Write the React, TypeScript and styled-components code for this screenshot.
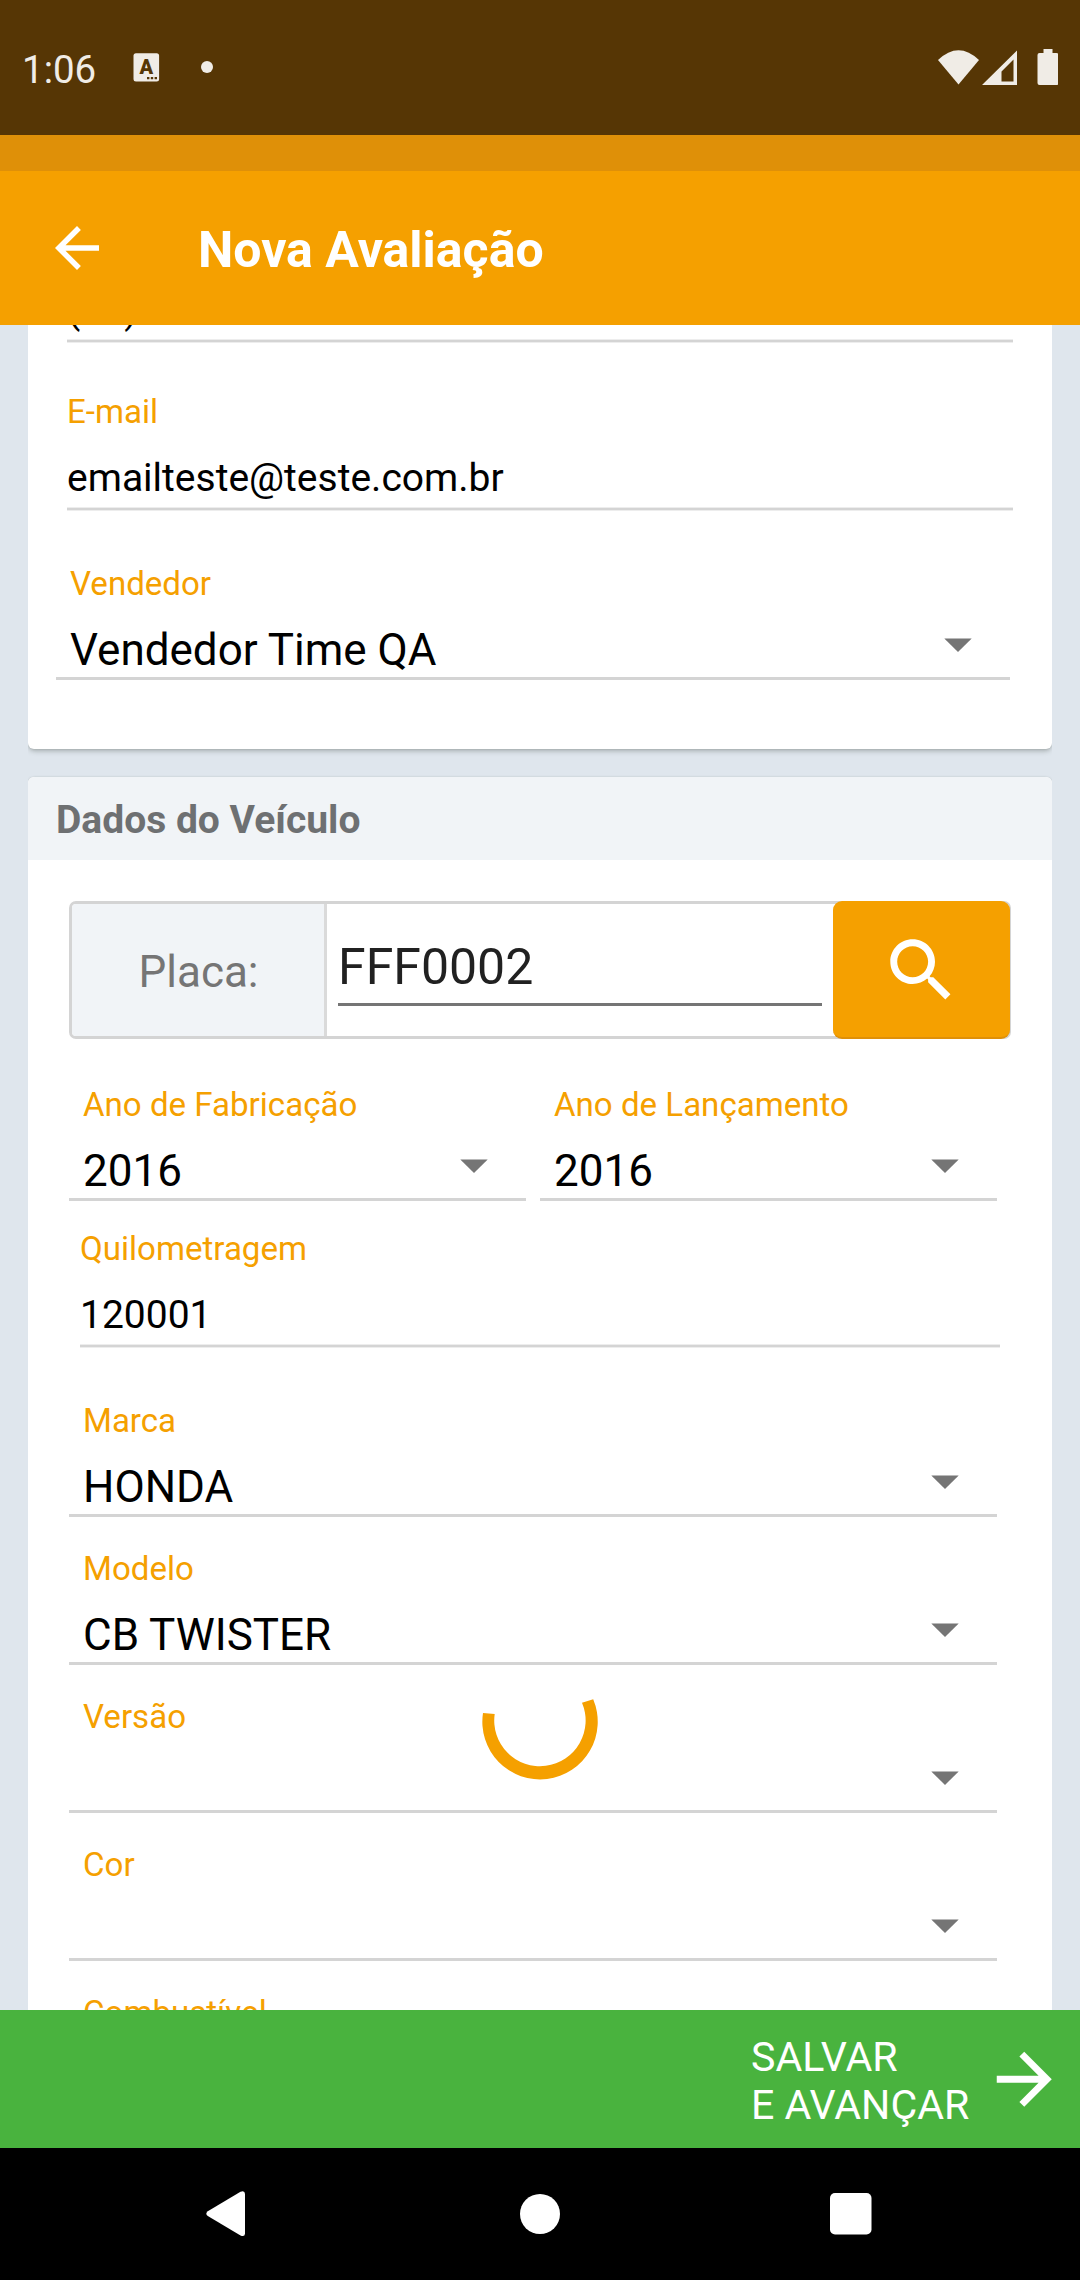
import React from 'react';
import styled, { createGlobalStyle } from 'styled-components';

const colors = {
  brand: '#f5a000',
  brandShade: '#df9008',
  status: '#563605',
  statusIcon: '#f0ece6',
  page: '#dfe6ed',
  panel: '#f1f4f7',
  line: '#d4d4d4',
  grey: '#757575',
  green: '#49b33e',
};

const GlobalStyle = createGlobalStyle`
  body {
    margin: 0;
    font-family: Roboto, 'Noto Sans', sans-serif;
  }
  * {
    box-sizing: border-box;
  }
`;

const Screen = styled.div`
  position: relative;
  display: flex;
  flex-direction: column;
  width: 1080px;
  height: 2280px;
  overflow: hidden;
  background: ${colors.page};
`;

const StatusBar = styled.div`
  display: flex;
  align-items: flex-start;
  height: 135px;
  flex-shrink: 0;
  padding: 47px 22px 0 22px;
  background: ${colors.status};
  color: ${colors.statusIcon};
`;

const Clock = styled.span`
  width: 111px;
  font-size: 38.5px;
  line-height: 46px;
`;

const StatusLeft = styled.div`
  display: flex;
  gap: 41px;
  flex: 1;
  padding-top: 6px;
`;

const StatusRight = styled.div`
  display: flex;
  padding-top: 2px;
`;

const Strip = styled.div`
  height: 36px;
  flex-shrink: 0;
  background: ${colors.brandShade};
`;

const Toolbar = styled.header`
  display: flex;
  align-items: center;
  height: 154px;
  flex-shrink: 0;
  padding-left: 44px;
  background: ${colors.brand};
`;

const Title = styled.h1`
  margin: 4px 0 0 88px;
  font-size: 50px;
  line-height: 58px;
  font-weight: 700;
  color: #fff;
`;

const ScrollArea = styled.main`
  display: flex;
  flex-direction: column;
  height: 1685px;
  flex-shrink: 0;
  gap: 28px;
  padding: 0 28px;
  overflow: hidden;
`;

const Card = styled.section<{ $scrolled?: number }>`
  flex-shrink: 0;
  margin-top: ${(p) => -(p.$scrolled ?? 0)}px;
  background: #fff;
  border-radius: 6px;
  box-shadow: 0 3px 5px -1px rgba(60, 70, 60, 0.35), 0 0 2px rgba(60, 70, 60, 0.18);
  clip-path: inset(-4px 0 -12px 0);
`;

const CardBody = styled.div`
  display: flex;
  flex-direction: column;
  padding-bottom: 69px;
`;

const CardHeader = styled.h2`
  height: 83px;
  margin: 0;
  padding: 20px 28px 0 28px;
  border-radius: 6px 6px 0 0;
  background: ${colors.panel};
  color: #6e7072;
  font-size: 39px;
  line-height: 47px;
  font-weight: 700;
`;

const FieldBox = styled.div<{ $top?: number; $left: number; $right: number }>`
  display: flex;
  flex-direction: column;
  margin: ${(p) => p.$top ?? 0}px ${(p) => p.$right}px 0 ${(p) => p.$left}px;
`;

const Label = styled.label`
  font-size: 33.1px;
  line-height: 39px;
  color: ${colors.brand};
`;

const InputValue = styled.span`
  height: 45px;
  margin-top: 24px;
  font-size: 39px;
  line-height: 47px;
  color: #000;
`;

const InputLine = styled.div`
  height: 4px;
  margin-top: 7px;
  background: ${colors.line};
  border-top: 1px solid #ededed;
  border-bottom: 1px solid #ededed;
`;

const SelectBox = styled.div<{ $top?: number; $left?: number; $right?: number }>`
  display: flex;
  flex: none;
  flex-direction: column;
  height: 116px;
  margin: ${(p) => p.$top ?? 0}px ${(p) => p.$right ?? 0}px 0 ${(p) => p.$left ?? 0}px;
  padding-left: 14px;
  border-bottom: 3px solid ${colors.line};
`;

const SelectRow = styled.div`
  display: flex;
  justify-content: space-between;
  align-items: flex-start;
  height: 52px;
  margin-top: 21px;
  padding-right: 38px;
`;

const SelectValue = styled.span`
  font-size: 44px;
  line-height: 52px;
  color: #000;
`;

const Caret = styled.svg`
  width: 28px;
  height: 14px;
  margin-top: 14px;
  fill: ${colors.grey};
`;

const PlateGroup = styled.div`
  display: flex;
  height: 138px;
  margin: 41px 41px 46px;
  border: 3px solid ${colors.line};
  border-radius: 7px;
`;

const PlateLabel = styled.div`
  width: 255px;
  padding: 42px 0 0 66.5px;
  border-right: 3px solid #dadada;
  border-radius: 4px 0 0 4px;
  background: ${colors.panel};
  color: ${colors.grey};
  font-size: 44px;
  line-height: 52px;
`;

const PlateInput = styled.div`
  flex: 1;
  height: 68px;
  margin: 34px 11px 0;
  border-bottom: 3px solid ${colors.grey};
  color: #212121;
  font-size: 50px;
  line-height: 58px;
`;

const SearchButton = styled.button`
  display: flex;
  align-items: center;
  justify-content: center;
  width: 177px;
  height: 138px;
  margin: -3px -2px 0 0;
  padding: 2px 0 0;
  border: 0;
  border-bottom: 2px solid ${colors.brandShade};
  border-radius: 9px;
  background: ${colors.brand};
`;

const YearRow = styled.div`
  display: grid;
  grid-template-columns: 1fr 1fr;
  gap: 14px;
  margin: 0 55px 0 41px;
`;

const Footer = styled.footer`
  display: flex;
  align-items: flex-start;
  justify-content: flex-end;
  height: 138px;
  flex-shrink: 0;
  padding-right: 14.5px;
  background: ${colors.green};
`;

const FooterText = styled.span`
  width: 232px;
  padding-top: 23px;
  color: #fff;
  font-size: 41.1px;
  line-height: 48px;
`;

const FooterArrow = styled.svg`
  width: 82.5px;
  height: 82.5px;
  margin-top: 27.5px;
  fill: #fff;
`;

const NavBar = styled.nav`
  display: grid;
  grid-template-columns: 451px 178px 443px;
  align-items: center;
  justify-items: center;
  height: 132px;
  flex-shrink: 0;
  background: #000;
`;

const Spinner = styled.svg`
  position: absolute;
  left: 470px;
  top: 1680px;
  width: 140px;
  height: 110px;
  fill: ${colors.brand};
`;

function InputField(props: { label?: string; value: string; top?: number; left: number; right: number }) {
  return (
    <FieldBox $top={props.top} $left={props.left} $right={props.right}>
      {props.label && <Label>{props.label}</Label>}
      <InputValue>{props.value}</InputValue>
      <InputLine />
    </FieldBox>
  );
}

function SelectField(props: { label: string; value?: string; top?: number; left?: number; right?: number }) {
  return (
    <SelectBox $top={props.top} $left={props.left} $right={props.right}>
      <Label>{props.label}</Label>
      <SelectRow>
        <SelectValue>{props.value}</SelectValue>
        <Caret viewBox="0 0 28 14">
          <path d="M0.3 0.4H27.7L14 14z" />
        </Caret>
      </SelectRow>
    </SelectBox>
  );
}

const vehicleFields = [
  { label: 'Marca', value: 'HONDA', top: 53 },
  { label: 'Modelo', value: 'CB TWISTER', top: 32 },
  { label: 'Versão', value: '', top: 32 },
  { label: 'Cor', value: '', top: 32 },
  { label: 'Combustível', value: '', top: 32 },
];

export default function App() {
  return (
    <>
      <GlobalStyle />
      <Screen>
        <StatusBar>
          <Clock>1:06</Clock>
          <StatusLeft>
            <svg width="27" height="29" viewBox="0 0 27 29">
              <rect x="0.5" y="0.2" width="25.6" height="28.4" rx="2.5" fill={colors.statusIcon} />
              <text x="13.2" y="21" fontSize="20" fontWeight="900" textAnchor="middle" fill={colors.status}>
                A
              </text>
              <path d="M14 24h2.4v2.3H14zM17.8 24h2.4v2.3h-2.4zM21.6 24H24v2.3h-2.4z" fill={colors.status} />
            </svg>
            <svg width="12" height="28" viewBox="0 0 12 28">
              <circle cx="6" cy="14" r="6" fill={colors.statusIcon} />
            </svg>
          </StatusLeft>
          <StatusRight>
            <svg width="120" height="38" viewBox="0 0 120 38" fill={colors.statusIcon}>
              <path d="M0 11Q20.5 -8.5 41 11L20.5 35.5z" />
              <path fillRule="evenodd" d="M79 1.5V36H44zM75.5 10.5L63.5 22.5V32.5H75.5z" />
              <path d="M105.5 0h9v4h4q2 0 2 2V34q0 2 -2 2h-17q-2 0 -2 -2V6q0 -2 2 -2h4z" />
            </svg>
          </StatusRight>
        </StatusBar>
        <Strip />
        <Toolbar>
          <svg width="66" height="66" viewBox="0 0 24 24" fill="#fff">
            <path d="M20 11H7.83l5.59-5.59L12 4l-8 8 8 8 1.41-1.41L7.83 13H20v-2z" />
          </svg>
          <Title>Nova Avaliação</Title>
        </Toolbar>

        <ScrollArea>
          <Card $scrolled={62}>
            <CardBody>
              <InputField value="(11)" left={39} right={39} />
              <InputField label="E-mail" value="emailteste@teste.com.br" top={49} left={39} right={39} />
              <SelectField label="Vendedor" value="Vendedor Time QA" top={53} left={28} right={42} />
            </CardBody>
          </Card>

          <Card>
            <CardHeader>Dados do Veículo</CardHeader>
            <PlateGroup>
              <PlateLabel>Placa:</PlateLabel>
              <PlateInput>FFF0002</PlateInput>
              <SearchButton aria-label="Buscar">
                <svg width="82.5" height="82.5" viewBox="0 0 24 24" fill="#fff">
                  <path d="M15.5 14h-.79l-.28-.27C15.41 12.59 16 11.11 16 9.5 16 5.91 13.09 3 9.5 3S3 5.91 3 9.5 5.91 16 9.5 16c1.61 0 3.09-.59 4.23-1.57l.27.28v.79l5 4.99L20.49 19l-4.99-5zm-6 0C7.01 14 5 11.99 5 9.5S7.01 5 9.5 5 14 7.01 14 9.5 11.99 14 9.5 14z" />
                </svg>
              </SearchButton>
            </PlateGroup>
            <YearRow>
              <SelectField label="Ano de Fabricação" value="2016" />
              <SelectField label="Ano de Lançamento" value="2016" />
            </YearRow>
            <InputField label="Quilometragem" value="120001" top={28} left={52} right={52} />
            {vehicleFields.map((f) => (
              <SelectField key={f.label} label={f.label} value={f.value} top={f.top} left={41} right={55} />
            ))}
          </Card>
        </ScrollArea>

        <Footer>
          <FooterText>
            SALVAR
            <br />E AVANÇAR
          </FooterText>
          <FooterArrow viewBox="0 0 24 24">
            <path d="M12 4l-1.41 1.41L16.17 11H4v2h12.17l-5.58 5.59L12 20l8-8z" />
          </FooterArrow>
        </Footer>

        <NavBar>
          <svg width="39" height="46" viewBox="0 0 39 46" fill="#fff">
            <path d="M34.5 0.8Q38.8 -1 39 3V42.5Q38.8 46.2 34.5 44.5L1.8 25Q-1.2 22.6 1.8 20.3z" />
          </svg>
          <svg width="42" height="42" viewBox="0 0 42 42" fill="#fff">
            <circle cx="21" cy="21" r="20" />
          </svg>
          <svg width="42" height="42" viewBox="0 0 42 42" fill="#fff">
            <rect width="41.5" height="41.5" rx="5" />
          </svg>
        </NavBar>

        <Spinner viewBox="0 0 140 110">
          <path d="M13 33L24.7 34A45.7 45.7 0 1 0 112 22.7L123.2 19.3A57.7 57.7 0 1 1 13 33z" />
        </Spinner>
      </Screen>
    </>
  );
}
